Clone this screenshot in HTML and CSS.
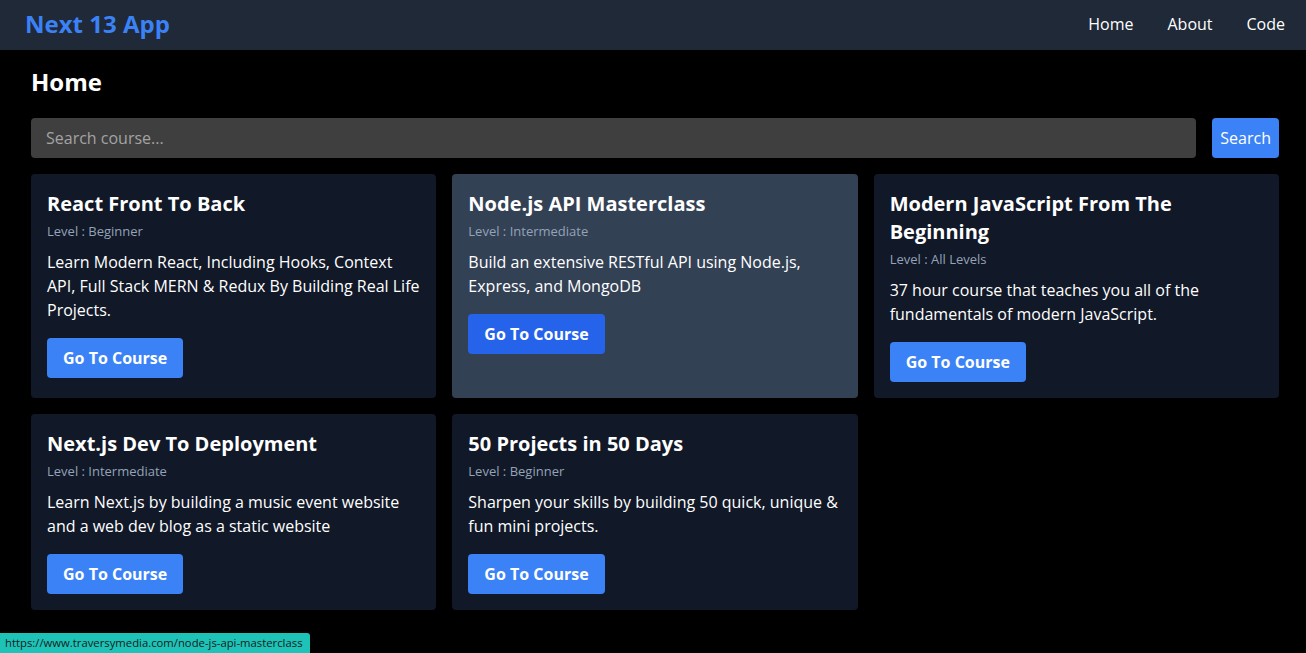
FILE: index.html
```html
<!DOCTYPE html>
<html lang="en">
<head>
<meta charset="utf-8">
<title>Next 13 App</title>
<link rel="stylesheet" href="styles.css">
</head>
<body>
<header class="navbar">
  <a class="logo" href="#">Next 13 App</a>
  <nav class="links">
    <a href="#">Home</a>
    <a href="#">About</a>
    <a href="#">Code</a>
  </nav>
</header>
<main class="main">
  <h1 class="page-title">Home</h1>
  <form class="search">
    <input class="search-input" type="text" placeholder="Search course...">
    <button class="search-btn" type="button">Search</button>
  </form>
  <div class="grid">
    <div class="card">
      <h2 class="card-title">React Front To Back</h2>
      <p class="level">Level : Beginner</p>
      <p class="desc">Learn Modern React, Including Hooks, Context API, Full Stack MERN &amp; Redux By Building Real Life Projects.</p>
      <a class="btn" href="#">Go To Course</a>
    </div>
    <div class="card card-hover">
      <h2 class="card-title">Node.js API Masterclass</h2>
      <p class="level">Level : Intermediate</p>
      <p class="desc">Build an extensive RESTful API using Node.js, Express, and MongoDB</p>
      <a class="btn btn-hover" href="#">Go To Course</a>
    </div>
    <div class="card">
      <h2 class="card-title">Modern JavaScript From The Beginning</h2>
      <p class="level">Level : All Levels</p>
      <p class="desc">37 hour course that teaches you all of the fundamentals of modern JavaScript.</p>
      <a class="btn" href="#">Go To Course</a>
    </div>
    <div class="card">
      <h2 class="card-title">Next.js Dev To Deployment</h2>
      <p class="level">Level : Intermediate</p>
      <p class="desc">Learn Next.js by building a music event website and a web dev blog as a static website</p>
      <a class="btn" href="#">Go To Course</a>
    </div>
    <div class="card">
      <h2 class="card-title">50 Projects in 50 Days</h2>
      <p class="level">Level : Beginner</p>
      <p class="desc">Sharpen your skills by building 50 quick, unique &amp; fun mini projects.</p>
      <a class="btn" href="#">Go To Course</a>
    </div>
  </div>
</main>
<div class="status">https://www.traversymedia.com/node-js-api-masterclass</div>
</body>
</html>
```

FILE: styles.css
```css
* { box-sizing: border-box; }
html, body { margin: 0; padding: 0; }
body {
  background: #000;
  color: #fff;
  font-family: "Open Sans", "Noto Sans", sans-serif;
  height: 653px;
  overflow: hidden;
}
a { text-decoration: none; color: inherit; }

.navbar {
  height: 50px;
  background: #1f2937;
  display: flex;
  align-items: center;
  justify-content: space-between;
  padding: 0 21px 2px 25px;
}
.logo {
  color: #3b82f6;
  font-weight: 700;
  font-size: 24px;
  line-height: 32px;
}
.links {
  display: flex;
  gap: 34px;
  font-size: 16px;
}
.links a { color: #fff; }

.main {
  padding: 16px 27px 0 31px;
}
.page-title {
  margin: 0;
  font-size: 24px;
  line-height: 32px;
  font-weight: 700;
}
.search {
  display: flex;
  gap: 16px;
  margin-top: 20px;
}
.search-input {
  flex: 1;
  height: 40px;
  background: #3f3f3f;
  border: none;
  border-radius: 4px;
  padding: 0 15px;
  font-family: inherit;
  font-size: 16px;
  color: #fff;
  outline: none;
}
.search-input::placeholder { color: #a3a3a3; }
.search-btn {
  height: 40px;
  background: #3b82f6;
  color: #fff;
  border: none;
  border-radius: 4px;
  padding: 0 8px;
  font-family: inherit;
  font-size: 16px;
}

.grid {
  margin-top: 16px;
  display: grid;
  grid-template-columns: repeat(3, 1fr);
  gap: 16px;
}
.card {
  background: #111827;
  border-radius: 4px;
  padding: 16px;
}
.card-hover { background: #334155; }
.card-title {
  margin: 0;
  font-size: 20px;
  line-height: 28px;
  font-weight: 700;
}
.level {
  margin: 4px 0 0;
  font-size: 13px;
  line-height: 18px;
  color: #94a3b8;
}
.desc {
  margin: 10px 0 0;
  font-size: 16px;
  line-height: 24px;
}
.btn {
  display: inline-block;
  margin-top: 16px;
  height: 40px;
  line-height: 40px;
  padding: 0 16px;
  background: #3b82f6;
  border-radius: 4px;
  font-weight: 700;
  font-size: 16px;
  color: #fff;
}
.btn-hover { background: #2563eb; }

.status {
  position: fixed;
  left: 0;
  bottom: 0;
  height: 20px;
  line-height: 20px;
  padding: 0 7px 0 5px;
  background: #1ec3b8;
  color: #1a1a1a;
  font-size: 11.3px;
  border-top-right-radius: 3px;
  font-family: "Open Sans", "Noto Sans", sans-serif;
}
```
